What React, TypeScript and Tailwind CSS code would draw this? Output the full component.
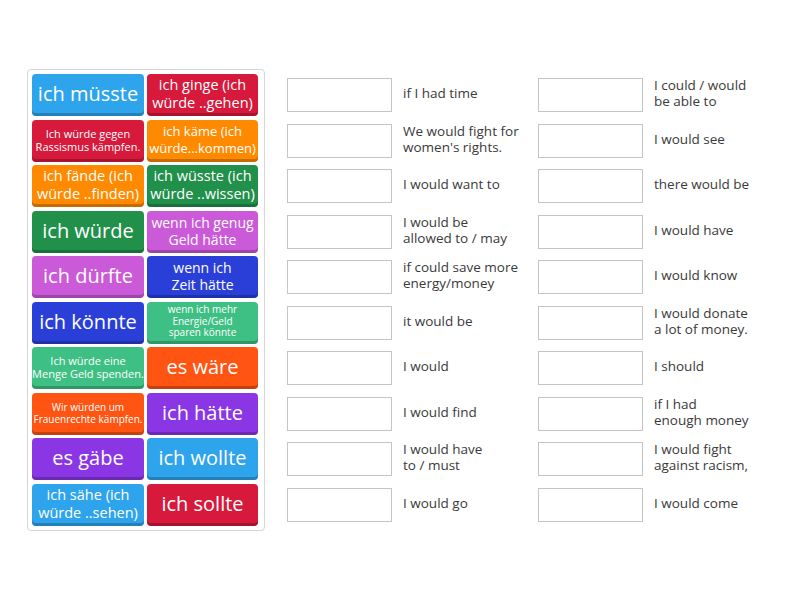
import React from 'react';

type Tile = { text: string; color: string; size: string };

const tiles: Tile[] = [
  { text: 'ich müsste', color: 'bg-[#2ea4ec]', size: 'text-[20px] leading-[24px]' },
  { text: 'ich ginge (ich\nwürde ..gehen)', color: 'bg-[#d7193b]', size: 'text-[14.5px] leading-[18px]' },
  { text: 'Ich würde gegen\nRassismus kämpfen.', color: 'bg-[#d7193b]', size: 'text-[11px] leading-[13px]' },
  { text: 'ich käme (ich\nwürde...kommen)', color: 'bg-[#ff8a00]', size: 'text-[13px] leading-[17px]' },
  { text: 'ich fände (ich\nwürde ..finden)', color: 'bg-[#ff8a00]', size: 'text-[14.5px] leading-[18px]' },
  { text: 'ich wüsste (ich\nwürde ..wissen)', color: 'bg-[#21904b]', size: 'text-[14.5px] leading-[18px]' },
  { text: 'ich würde', color: 'bg-[#21904b]', size: 'text-[20px] leading-[24px]' },
  { text: 'wenn ich genug\nGeld hätte', color: 'bg-[#cb5ad8]', size: 'text-[14px] leading-[17px]' },
  { text: 'ich dürfte', color: 'bg-[#cb5ad8]', size: 'text-[20px] leading-[24px]' },
  { text: 'wenn ich\nZeit hätte', color: 'bg-[#2a3fd8]', size: 'text-[14px] leading-[17px]' },
  { text: 'ich könnte', color: 'bg-[#2a3fd8]', size: 'text-[20px] leading-[24px]' },
  { text: 'wenn ich mehr\nEnergie/Geld\nsparen könnte', color: 'bg-[#3ebf84]', size: 'text-[10px] leading-[11.5px]' },
  { text: 'Ich würde eine\nMenge Geld spenden.', color: 'bg-[#3ebf84]', size: 'text-[11px] leading-[13px]' },
  { text: 'es wäre', color: 'bg-[#ff5412]', size: 'text-[20px] leading-[24px]' },
  { text: 'Wir würden um\nFrauenrechte kämpfen.', color: 'bg-[#ff5412]', size: 'text-[10px] leading-[12px]' },
  { text: 'ich hätte', color: 'bg-[#8b36e5]', size: 'text-[20px] leading-[24px]' },
  { text: 'es gäbe', color: 'bg-[#8b36e5]', size: 'text-[20px] leading-[24px]' },
  { text: 'ich wollte', color: 'bg-[#2ea4ec]', size: 'text-[20px] leading-[24px]' },
  { text: 'ich sähe (ich\nwürde ..sehen)', color: 'bg-[#2ea4ec]', size: 'text-[14.5px] leading-[18px]' },
  { text: 'ich sollte', color: 'bg-[#d7193b]', size: 'text-[20px] leading-[24px]' },
];

const left = [
  'if I had time',
  "We would fight for\nwomen's rights.",
  'I would want to',
  'I would be\nallowed to / may',
  'if could save more\nenergy/money',
  'it would be',
  'I would',
  'I would find',
  'I would have\nto / must',
  'I would go',
];

const right = [
  'I could / would\nbe able to',
  'I would see',
  'there would be',
  'I would have',
  'I would know',
  'I would donate\na lot of money.',
  'I should',
  'if I had\nenough money',
  'I would fight\nagainst racism,',
  'I would come',
];

const Slot = ({ label }: { label: string }) => (
  <div className="flex items-center h-[34px]">
    <div className="w-[105px] h-[34px] border border-[#c4c4c4] bg-white shrink-0" />
    <div className="ml-[11px] -mt-[4px] text-[13.5px] leading-[16px] text-[#3a3a3a] whitespace-pre-line">{label}</div>
  </div>
);

export default function App() {
  return (
    <div
      className="w-[800px] h-[600px] bg-white flex pt-[69px] pl-[27px]"
      style={{ fontFamily: '"Open Sans", "Noto Sans", sans-serif' }}
    >
      <div className="w-[238px] h-[462px] border border-[#d6d6d6] rounded-[4px] pt-[4px] pl-[4px]">
        <div className="grid grid-cols-[112px_111px] gap-x-[3px] gap-y-[3.5px]">
          {tiles.map((t, i) => (
            <div
              key={i}
              className={`${t.color} h-[42px] rounded-[4px] shadow-[inset_0_-3px_0_rgba(0,0,0,0.22)] flex items-center justify-center text-center text-white font-medium whitespace-pre-line pb-[2px] ${t.size}`}
            >
              {t.text}
            </div>
          ))}
        </div>
      </div>

      <div className="ml-[22px] pt-[9px] flex gap-x-[11px]">
        <div className="w-[240px] flex flex-col gap-y-[11.5px]">
          {left.map((l, i) => (
            <Slot key={i} label={l} />
          ))}
        </div>
        <div className="w-[240px] flex flex-col gap-y-[11.5px]">
          {right.map((l, i) => (
            <Slot key={i} label={l} />
          ))}
        </div>
      </div>
    </div>
  );
}
